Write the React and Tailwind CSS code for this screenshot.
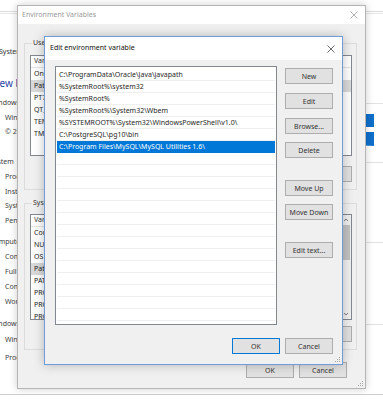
import React from "react";

const editPaths = [
  "C:\\ProgramData\\Oracle\\Java\\javapath",
  "%SystemRoot%\\system32",
  "%SystemRoot%",
  "%SystemRoot%\\System32\\Wbem",
  "%SYSTEMROOT%\\System32\\WindowsPowerShell\\v1.0\\",
  "C:\\PostgreSQL\\pg10\\bin",
  "C:\\Program Files\\MySQL\\MySQL Utilities 1.6\\",
];

const userVars = [
  ["OneDrive", "C:\\Users\\admin\\OneDrive"],
  ["Path", "C:\\Users\\admin\\AppData\\Local\\Microsoft\\WindowsApps;"],
  ["PT7HOME", "C:\\Program Files\\Cisco Packet Tracer 7.1"],
  ["QT_SCALE", "auto"],
  ["TEMP", "%USERPROFILE%\\AppData\\Local\\Temp"],
  ["TMP", "%USERPROFILE%\\AppData\\Local\\Temp"],
];

const systemVars = [
  ["ComSpec", "C:\\WINDOWS\\system32\\cmd.exe"],
  ["NUMBER_OF_P...", "4"],
  ["OS", "Windows_NT"],
  ["Path", "C:\\ProgramData\\Oracle\\Java\\javapath;%SystemRoot%"],
  ["PATHEXT", ".COM;.EXE;.BAT;.CMD;.VBS;.VBE;.JS;.JSE"],
  ["PROCESSOR_A...", "AMD64"],
  ["PROCESSOR_I...", "Intel64 Family 6 Model 142"],
  ["PROCESSOR_L...", "6"],
  ["PROCESSOR_R...", "8e09"],
];

function CloseIcon({ color = "#555" }) {
  return (
    <svg width="8" height="8" viewBox="0 0 8 8" aria-hidden="true">
      <path d="M0.5 0.5 L7.5 7.5 M7.5 0.5 L0.5 7.5" stroke={color} strokeWidth="0.8" fill="none" />
    </svg>
  );
}

function Grip() {
  return (
    <svg width="7" height="7" viewBox="0 0 7 7" aria-hidden="true">
      <g fill="#a8a8a8">
        <rect x="5" y="1" width="1" height="1" />
        <rect x="3" y="3" width="1" height="1" />
        <rect x="5" y="3" width="1" height="1" />
        <rect x="1" y="5" width="1" height="1" />
        <rect x="3" y="5" width="1" height="1" />
        <rect x="5" y="5" width="1" height="1" />
      </g>
    </svg>
  );
}

function Button({ children, primary }) {
  return (
    <div
      className={`flex h-[16px] w-[48px] shrink-0 items-center justify-center border bg-[#e1e1e1] text-[7px] leading-none text-[#333] ${
        primary ? "border-[#0078d7]" : "border-[#adadad]"
      }`}
    >
      {children}
    </div>
  );
}

function SectionHeading({ children }) {
  return (
    <div className="flex h-[14px] items-center gap-[4px] text-[7px] text-[#3c3c3c]">
      <span className="whitespace-nowrap">{children}</span>
      <div className="h-px flex-1 bg-[#e2e2e2]" />
    </div>
  );
}

function Item({ children, className = "" }) {
  return (
    <div className={`h-[14px] whitespace-nowrap pl-[15px] text-[7px] leading-[14px] text-[#444] ${className}`}>
      {children}
    </div>
  );
}

function Backdrop() {
  return (
    <div className="absolute left-[-10px] top-0 flex h-[400px] w-[400px] flex-col bg-white pt-[11px]">
      <div className="h-px bg-[#dcdcdc]" />
      <div className="mt-px h-px bg-[#e6e6e6]" />
      <div className="mt-[31px] h-[14px] whitespace-nowrap pl-[9px] text-[7px] leading-[14px] text-[#333]">
        System
      </div>
      <div className="mt-[16px] h-[16px] whitespace-nowrap pl-[1px] text-[10px] leading-[16px] text-[#2a47a8]">
        View basic information about your computer
      </div>
      <div className="mt-[5px]">
        <SectionHeading>Windows edition</SectionHeading>
      </div>
      <div className="mt-px flex items-start">
        <div className="flex flex-1 flex-col">
          <Item>Windows 10 Pro</Item>
          <Item>© 2017 Microsoft Corporation. All rights reserved.</Item>
        </div>
        <svg width="40" height="32" viewBox="0 0 40 32" className="mr-[16px] mt-[3px]" aria-hidden="true">
          <path d="M0 2 L18 0 L18 13 L0 13 Z M21 0 L40 0 L40 13 L21 13 Z M0 18 L18 18 L18 31 L0 30 Z M21 18 L40 18 L40 32 L21 31 Z" fill="#0f6fcb" />
        </svg>
      </div>
      <div className="mt-[9px]">
        <SectionHeading>System</SectionHeading>
      </div>
      <Item className="mt-px">Processor:</Item>
      <Item className="mt-px">Installed memory (RAM):</Item>
      <Item>System type:</Item>
      <Item className="mt-px">Pen and Touch:</Item>
      <div className="mt-[7px]">
        <SectionHeading>Computer name, domain, and workgroup settings</SectionHeading>
      </div>
      <Item className="mt-px">Computer name:</Item>
      <Item className="mt-px">Full computer name:</Item>
      <Item className="mt-px">Computer description:</Item>
      <Item className="mt-px">Workgroup:</Item>
      <div className="mt-[8px]">
        <SectionHeading>Windows activation</SectionHeading>
      </div>
      <Item className="mt-[2px]">Windows is activated</Item>
      <Item className="mt-[4px]">Product ID:</Item>
      <div className="mt-[29px] h-px bg-[#cfcfcf]" />
    </div>
  );
}

function VarList({ rows, selected, height, scroll }) {
  return (
    <div className="flex border border-[#828790] bg-white" style={{ height }}>
      <div className="flex min-w-0 flex-1 flex-col overflow-hidden">
        <div className="flex h-[12px] shrink-0 items-center border-b border-[#e5e5e5] text-[7px] text-[#333]">
          <span className="w-[90px] shrink-0 border-r border-[#e5e5e5] pl-[3px]">Variable</span>
          <span className="pl-[4px]">Value</span>
        </div>
        {rows.map(([name, value], i) => (
          <div
            key={name}
            className={`flex h-[12px] shrink-0 items-center whitespace-nowrap text-[7px] text-[#1f1f1f] ${
              i === selected ? "bg-[#d9d9d9]" : ""
            }`}
          >
            <span className="w-[90px] shrink-0 overflow-hidden pl-[3px]">{name}</span>
            <span className="pl-[4px]">{value}</span>
          </div>
        ))}
      </div>
      {scroll ? (
        <div className="flex w-[10px] shrink-0 flex-col items-center bg-[#f0f0f0]">
          <svg width="6" height="10" viewBox="0 0 6 10" aria-hidden="true">
            <path d="M1 6 L3 4 L5 6" stroke="#606060" strokeWidth="0.8" fill="none" />
          </svg>
          <div className="h-[35px] w-[7px] bg-[#c2c2c2]" />
          <div className="flex-1" />
          <svg width="6" height="10" viewBox="0 0 6 10" aria-hidden="true">
            <path d="M1 4 L3 6 L5 4" stroke="#606060" strokeWidth="0.8" fill="none" />
          </svg>
        </div>
      ) : null}
    </div>
  );
}

function EnvWindow() {
  return (
    <div className="absolute left-[17px] top-[5px] flex h-[384px] w-[349px] flex-col border border-[#b5b5b5] bg-[#f0f0f0] shadow-[0_0_8px_rgba(0,0,0,0.2)]">
      <div className="flex h-[18px] shrink-0 items-center justify-between bg-white pl-[4px] pr-[7px] text-[7px] text-[#9a9a9a]">
        <span>Environment Variables</span>
        <CloseIcon color="#a0a0a0" />
      </div>
      <div className="flex flex-1 flex-col pl-[6px] pr-[8px] pt-[14px]">
        <fieldset className="border border-[#dcdcdc] pb-[7px] pl-[5px] pr-[4px] pt-[7px]">
          <legend className="ml-[2px] px-[1px] text-[7px] leading-[10px] text-[#333]">
            User variables for admin
          </legend>
          <VarList rows={userVars} selected={1} height="101px" />
          <div className="mt-[10px] flex justify-end gap-[5px]">
            <Button>New...</Button>
            <Button>Edit...</Button>
            <Button>Delete</Button>
          </div>
        </fieldset>
        <fieldset className="mt-[8px] border border-[#dcdcdc] pb-[7px] pl-[5px] pr-[4px] pt-[6px]">
          <legend className="ml-[2px] px-[1px] text-[7px] leading-[10px] text-[#333]">
            System variables
          </legend>
          <VarList rows={systemVars} selected={3} height="106px" scroll />
          <div className="mt-[6px] flex justify-end gap-[5px]">
            <Button>New...</Button>
            <Button>Edit...</Button>
            <Button>Delete</Button>
          </div>
        </fieldset>
        <div className="mt-[12px] flex justify-end gap-[5px] pr-[10px]">
          <Button>OK</Button>
          <Button>Cancel</Button>
        </div>
      </div>
      <div className="absolute bottom-[1px] right-[1px]">
        <Grip />
      </div>
    </div>
  );
}

function EditDialog() {
  const emptyRows = Array.from({ length: 14 });
  return (
    <div className="absolute left-[44px] top-[36px] flex h-[329px] w-[299px] flex-col border border-[#6f9bd8] bg-[#f0f0f0] shadow-[0_0_10px_rgba(0,0,0,0.25)]">
      <div className="flex h-[23px] shrink-0 items-center justify-between bg-white pl-[5px] pr-[7px] text-[7px] text-[#111]">
        <span>Edit environment variable</span>
        <CloseIcon color="#444" />
      </div>
      <div className="flex flex-1 flex-col pb-[10px] pl-[10px] pr-[9px] pt-[6px]">
        <div className="flex flex-1 gap-[8px]">
          <div className="flex h-[259px] flex-1 flex-col overflow-hidden border border-[#828790] bg-white px-px pt-[2px]">
            {editPaths.map((p, i) => (
              <div
                key={p}
                className={`h-[12px] shrink-0 whitespace-nowrap border-b pl-[2px] text-[7px] leading-[11px] ${
                  i === editPaths.length - 1
                    ? "border-[#0078d7] bg-[#0078d7] text-white"
                    : "border-[#efefef] text-[#1f1f1f]"
                }`}
              >
                {p}
              </div>
            ))}
            {emptyRows.map((_, i) => (
              <div key={i} className="h-[12px] shrink-0 border-b border-[#efefef]" />
            ))}
          </div>
          <div className="flex w-[48px] flex-col pt-[2px]">
            <Button>New</Button>
            <div className="mt-[9px]">
              <Button>Edit</Button>
            </div>
            <div className="mt-[9px]">
              <Button>Browse...</Button>
            </div>
            <div className="mt-[8px]">
              <Button>Delete</Button>
            </div>
            <div className="mt-[22px]">
              <Button>Move Up</Button>
            </div>
            <div className="mt-[8px]">
              <Button>Move Down</Button>
            </div>
            <div className="mt-[22px]">
              <Button>Edit text...</Button>
            </div>
          </div>
        </div>
        <div className="mt-[13px] flex justify-end gap-[5px]">
          <Button primary>OK</Button>
          <Button>Cancel</Button>
        </div>
      </div>
      <div className="absolute bottom-[1px] right-[1px]">
        <Grip />
      </div>
    </div>
  );
}

export default function App() {
  return (
    <div className="relative h-[400px] w-[383px] overflow-hidden bg-white font-['Noto_Sans','Open_Sans',sans-serif]">
      <Backdrop />
      <EnvWindow />
      <EditDialog />
    </div>
  );
}
